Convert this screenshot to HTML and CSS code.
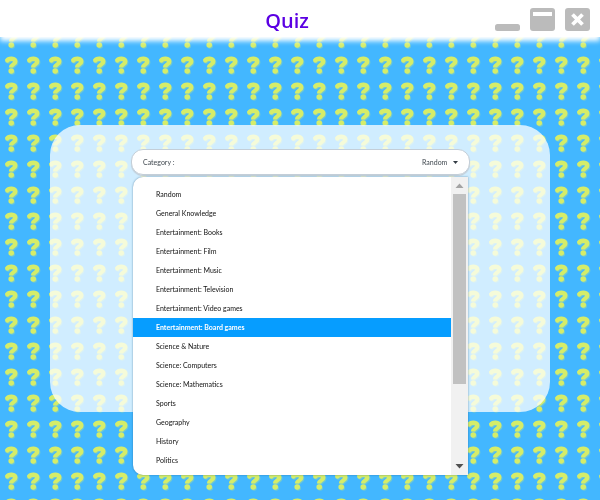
FILE: index.html
```
<!DOCTYPE html>
<html lang="en">
<head>
<meta charset="utf-8">
<title>Quiz</title>
<link rel="stylesheet" href="styles.css">
</head>
<body>
<svg class="backdrop" aria-hidden="true">
  <defs>
    <pattern id="marks" width="22" height="26" patternUnits="userSpaceOnUse" patternTransform="translate(0 3)">
      <g opacity=".3"><use href="#mark" x="1" y="1"/></g>
      <g id="mark">
        <path d="M7 5.800C8.500 3 15.300 2.800 15.300 6.800C15.300 9.500 11.200 9 11 12.500" fill="none" stroke="#d5ed69" stroke-width="4.300"/>
        <circle cx="7.300" cy="5.600" r="2.200" fill="#d5ed69"/>
        <circle cx="11.200" cy="16" r="2.800" fill="#d5ed69"/>
      </g>
    </pattern>
  </defs>
  <rect width="100%" height="100%" fill="url(#marks)"/>
</svg>
<header class="titlebar">
  <h1 class="title">Quiz</h1>
  <div class="window-controls">
    <button class="window-button" type="button" aria-label="Minimize"><svg viewBox="0 0 25 23"><rect y="16" width="25" height="7" rx="2.500" fill="#bbb"/></svg></button>
    <button class="window-button" type="button" aria-label="Maximize"><svg viewBox="0 0 25 23"><rect width="25" height="23" rx="3" fill="#bbb"/><path d="M3 4h19v4H3z" fill="#fff"/></svg></button>
    <button class="window-button" type="button" aria-label="Close"><svg viewBox="0 0 25 23"><rect width="25" height="23" rx="3" fill="#bbb"/><path d="M7.500 6.500l10 10M17.500 6.500l-10 10" stroke="#fff" stroke-width="3.800"/></svg></button>
  </div>
</header>
<main class="page">
  <form class="card">
    <div class="field">
      <label class="field-label" for="category">Category :</label>
      <select class="field-select" id="category"><option>Random</option></select>
      <svg class="caret" viewBox="0 0 5 3" aria-hidden="true"><path d="M0 0h5L2.500 3z" fill="#333c45"/></svg>
      <div class="menu">
        <ul class="options" role="listbox" aria-label="Category">
          <li class="option" role="option">Random</li>
          <li class="option" role="option">General Knowledge</li>
          <li class="option" role="option">Entertainment: Books</li>
          <li class="option" role="option">Entertainment: Film</li>
          <li class="option" role="option">Entertainment: Music</li>
          <li class="option" role="option">Entertainment: Television</li>
          <li class="option" role="option">Entertainment: Video games</li>
          <li class="option active" role="option" aria-selected="true">Entertainment: Board games</li>
          <li class="option" role="option">Science &amp; Nature</li>
          <li class="option" role="option">Science: Computers</li>
          <li class="option" role="option">Science: Mathematics</li>
          <li class="option" role="option">Sports</li>
          <li class="option" role="option">Geography</li>
          <li class="option" role="option">History</li>
          <li class="option" role="option">Politics</li>
        </ul>
        <div class="scrollbar" aria-hidden="true">
          <svg class="arrow" viewBox="0 0 17 17"><path d="M4.500 11h8l-4-4.500z" fill="#a3a3a3"/></svg>
          <div class="track"><div class="thumb"></div></div>
          <svg class="arrow" viewBox="0 0 17 17"><path d="M4.500 6h8l-4 4.500z" fill="#505050"/></svg>
        </div>
      </div>
    </div>
  </form>
</main>
</body>
</html>
```
FILE: styles.css
```
* { box-sizing: border-box; }

body {
  margin: 0;
  min-height: 100vh;
  background: #43b7ff;
  color: #212529;
  font: 7px/19px Lato, "Open Sans", sans-serif;
}

.backdrop {
  position: fixed;
  inset: 0;
  z-index: -1;
  width: 100%;
  height: 100%;
}

.titlebar {
  position: relative;
  display: grid;
  align-items: center;
  height: 37px;
  padding: 2px 10px 0;
  background: #fff;
  box-shadow: 0 4px 5px #fff;
}

.title {
  grid-area: 1 / 1;
  margin: 0;
  padding: 2px 26px 0 0;
  color: #5b00e3;
  font: 600 20px/32px "Open Sans", sans-serif;
  text-align: center;
}

.window-controls {
  grid-area: 1 / 1;
  justify-self: end;
  display: flex;
  gap: 10px;
}

.window-button {
  width: 25px;
  height: 23px;
  padding: 0;
  border: 0;
  background: none;
}

.window-button svg { display: block; }

.page { padding: 88px 50px; }

.card {
  min-height: 287px;
  padding: 24px 80px 24px 81px;
  border-radius: 30px;
  background: rgb(255 255 255 / 75%);
}

.field {
  position: relative;
  display: flex;
  align-items: center;
  height: 26px;
  padding: 0 11px;
  border: 1px solid #c3ced8;
  border-radius: 12px;
  background: #fff;
  box-shadow: 0 1px 1px #c3ced8;
  color: #414950;
}

.field-label { flex: 1; }

.field-select {
  appearance: none;
  padding: 0;
  border: 0;
  background: none;
  color: inherit;
  font: inherit;
}

.caret {
  width: 5px;
  height: 3px;
  margin-left: 5px;
}

.menu {
  position: absolute;
  top: 27px;
  left: 1px;
  right: 1px;
  display: flex;
  overflow: hidden;
  border-radius: 10px 0 0 10px;
  background: #fff;
  box-shadow: 0 0 2px rgb(20 70 110 / 60%);
}

.options {
  flex: 1;
  margin: 0;
  padding: 8px 0 5px;
  list-style: none;
}

.option {
  padding-left: 23px;
  color: #111;
}

.active {
  background: #069dff;
  color: #fff;
  font-weight: 700;
}

.scrollbar {
  display: flex;
  flex-direction: column;
  width: 17px;
  background: #f1f1f1;
}

.arrow {
  width: 17px;
  height: 17px;
}

.track {
  flex: 1;
  padding: 0 2px;
}

.thumb {
  height: 72%;
  background: #c1c1c1;
}
```
